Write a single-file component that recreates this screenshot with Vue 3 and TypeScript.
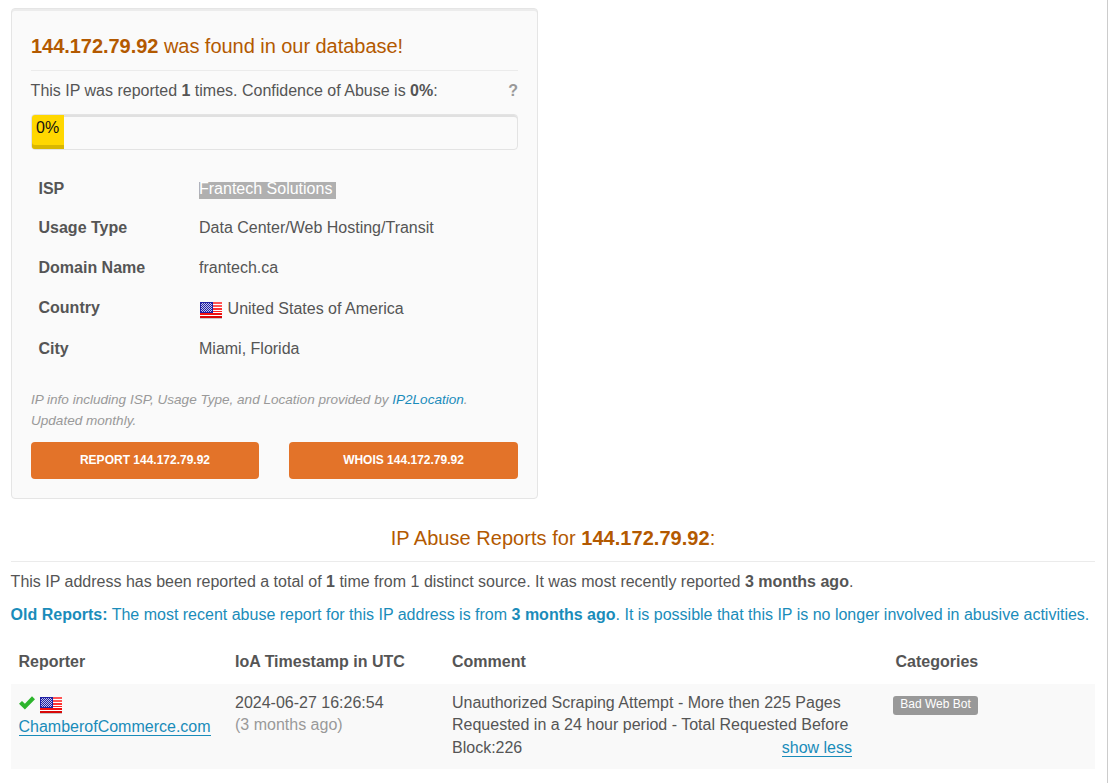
<script setup lang="ts">
import { h } from 'vue'

const ip = '144.172.79.92'

interface InfoRow {
  label: string
  value: string
  selected?: boolean
  flag?: boolean
}

const rows: InfoRow[] = [
  { label: 'ISP', value: 'Frantech Solutions', selected: true },
  { label: 'Usage Type', value: 'Data Center/Web Hosting/Transit' },
  { label: 'Domain Name', value: 'frantech.ca' },
  { label: 'Country', value: 'United States of America', flag: true },
  { label: 'City', value: 'Miami, Florida' },
]

// Small United States flag: striped field with a dotted canton.
const UsFlag = () => {
  const shapes = [
    h('rect', { x: 0, y: 16, width: 22, height: 1, fill: '#000', opacity: 0.2 }),
    h('rect', { width: 22, height: 16, fill: '#fff' }),
  ]
  const reds = [
    [0, 2, '#f55'],
    [3, 2, '#f55'],
    [6, 2, '#f33'],
    [9, 1, '#f22'],
    [11, 2, '#f01010'],
    [14, 2, '#d80808'],
  ] as const
  for (const [y, height, fill] of reds) shapes.push(h('rect', { y, width: 22, height, fill }))
  shapes.push(h('rect', { width: 13, height: 11, fill: '#2020a4' }))
  for (let y = 1; y < 10; y++) {
    for (let x = 1 + (y % 2); x < 12; x += 2) {
      shapes.push(h('rect', { x, y, width: 1, height: 1, fill: '#c4c4ea' }))
    }
  }
  return h('svg', { width: 22, height: 17, viewBox: '0 0 22 17', 'shape-rendering': 'crispEdges' }, shapes)
}
</script>

<template>
  <main class="page">
    <section class="card">
      <h3 class="title"><b>{{ ip }}</b> was found in our database!</h3>
      <p class="summary">
        <span>This IP was reported <b>1</b> times. Confidence of Abuse is <b>0%</b>:</span>
        <b class="help">?</b>
      </p>
      <div class="progress"><div class="bar">0%</div></div>
      <dl class="info">
        <div v-for="row in rows" :key="row.label" class="info-row" :class="{ first: row.selected }">
          <dt>{{ row.label }}</dt>
          <dd :class="{ 'with-flag': row.flag }">
            <UsFlag v-if="row.flag" class="flag" />
            <span :class="{ selected: row.selected }">{{ row.value }}</span>
          </dd>
        </div>
      </dl>
      <p class="note">
        IP info including ISP, Usage Type, and Location provided by <a>IP2Location</a>.<br />Updated monthly.
      </p>
      <div class="actions">
        <button>REPORT {{ ip }}</button>
        <button>WHOIS {{ ip }}</button>
      </div>
    </section>

    <section class="reports">
      <h3 class="heading">IP Abuse Reports for <b>{{ ip }}</b>:</h3>
      <p class="total">
        This IP address has been reported a total of <b>1</b> time from 1 distinct source. It was most recently reported <b>3 months ago</b>.
      </p>
      <p class="old">
        <b>Old Reports:</b> The most recent abuse report for this IP address is from <b>3 months ago</b>. It is possible that this IP is no longer involved in abusive activities.
      </p>
      <div class="table">
        <div class="grid head">
          <div>Reporter</div>
          <div>IoA Timestamp in UTC</div>
          <div>Comment</div>
          <div class="cat-head">Categories</div>
        </div>
        <div class="grid entry">
          <div>
            <div class="icons">
              <svg class="check" width="17" height="14" viewBox="0 0 17 14">
                <path d="M0 7.8 L3 4.9 L5.9 7.7 L13 0.3 L16 3.2 L5.9 13.4 Z" fill="#2db52d" />
              </svg>
              <UsFlag />
            </div>
            <a class="link">ChamberofCommerce.com</a>
          </div>
          <div>2024-06-27 16:26:54<br /><span class="muted">(3 months ago)</span></div>
          <div class="comment">
            Unauthorized Scraping Attempt - More then 225 Pages<br />Requested in a 24 hour period - Total Requested Before
            <div class="last"><span>Block:226</span><a class="link">show less</a></div>
          </div>
          <div><span class="badge">Bad Web Bot</span></div>
        </div>
      </div>
    </section>
  </main>
</template>

<style>
body {
  margin: 0;
  background: #fff;
}
</style>

<style scoped>
.page {
  box-sizing: border-box;
  width: 1108px;
  height: 783px;
  padding: 8px 12px 0 11px;
  border-right: 1px solid #ccc;
  overflow: hidden;
  font-family: "Liberation Sans", Arial, sans-serif;
  font-size: 16px;
  line-height: 22.5px;
  color: #555;
  white-space: nowrap;
}
h3, p, dl, dd { margin: 0; }
.card {
  box-sizing: border-box;
  width: 527px;
  height: 491px;
  padding: 22px 19px 0;
  background: #fafafa;
  border: 1px solid #e5e5e5;
  border-radius: 4px;
  box-shadow: inset 0 2px 0 #ececec;
}
.title, .heading {
  font-size: 20px;
  font-weight: 400;
  line-height: 30px;
  color: #b35900;
  border-bottom: 1px solid #ebebeb;
}
.title { height: 39px; letter-spacing: -0.04px; }
.summary {
  display: flex;
  justify-content: space-between;
  margin-top: 9px;
}
.summary, .total, .old { margin-left: -0.4px; }
.help { color: #999; }
.progress {
  box-sizing: border-box;
  height: 36px;
  margin-top: 11.5px;
  border: 1px solid #e3e3e3;
  border-radius: 4px;
  box-shadow: inset 0 2px 0 #e0e0e0;
}
.bar {
  box-sizing: border-box;
  width: 32px;
  height: 34px;
  padding-left: 4px;
  line-height: 25px;
  color: #111;
  background: #ffd700;
  border-radius: 3px 0 0 3px;
  box-shadow: inset 0 -4px 0 #d9b700;
}
.info {
  display: grid;
  grid-template-rows: 39px 40px 40px 41px 40px;
  margin-top: 19px;
  padding-left: 7.5px;
}
.info-row {
  display: grid;
  grid-template-columns: 160.5px 1fr;
  align-items: center;
}
.info-row.first { padding-top: 2px; }
dt { font-weight: 700; }
dd { display: flex; align-items: center; }
.with-flag { padding-top: 2px; }
.flag { margin: 2px 5.6px 0 1px; }
.selected {
  height: 17px;
  padding-right: 4px;
  line-height: 14px;
  color: #fff;
  background: #b0b0b0;
  margin-top: 2px;
}
.note {
  margin-top: 19.5px;
  font-size: 13.56px;
  line-height: 21px;
  font-style: italic;
  color: #999;
}
.note a { color: #1a8cba; }
.actions {
  display: grid;
  grid-template-columns: 228px 229px;
  gap: 30px;
  margin-top: 11.5px;
}
button {
  height: 37px;
  padding: 0 0 1px;
  border: 0;
  border-radius: 4px;
  background: #e37329;
  color: #fff;
  font: 700 12px "Liberation Sans", Arial, sans-serif;
}
.heading {
  height: 38px;
  margin-top: 24px;
  text-align: center;
  letter-spacing: 0.04px;
}
.total { margin-top: 9px; }
.old { margin-top: 10px; color: #1a8cba; }
.table { margin-top: 14px; }
.grid {
  display: grid;
  grid-template-columns: 216.5px 217px 441px 1fr;
  box-sizing: border-box;
  padding-left: 7.5px;
}
.head { height: 44px; padding-top: 11px; font-weight: 700; }
.cat-head { padding-left: 2.5px; }
.entry {
  height: 85px;
  padding-top: 7.7px;
  background: #f9f9f9;
}
.icons { display: flex; height: 24.3px; gap: 4px; }
.icons svg { margin-top: 5.3px; }
.icons .check { margin-top: 4.3px; }
.link {
  display: inline-block;
  line-height: 18px;
  height: 17px;
  color: #1a8cba;
  border-bottom: 1px solid #1a8cba;
}
.muted { color: #999; }
.comment { width: 400px; }
.last { display: flex; justify-content: space-between; }
.last .link { margin-top: 2px; }
.badge {
  display: block;
  box-sizing: border-box;
  width: 85px;
  height: 19px;
  margin-top: 4.3px;
  border-radius: 3px;
  background: #999;
  color: #fff;
  font-size: 12px;
  line-height: 16px;
  text-align: center;
}
</style>
